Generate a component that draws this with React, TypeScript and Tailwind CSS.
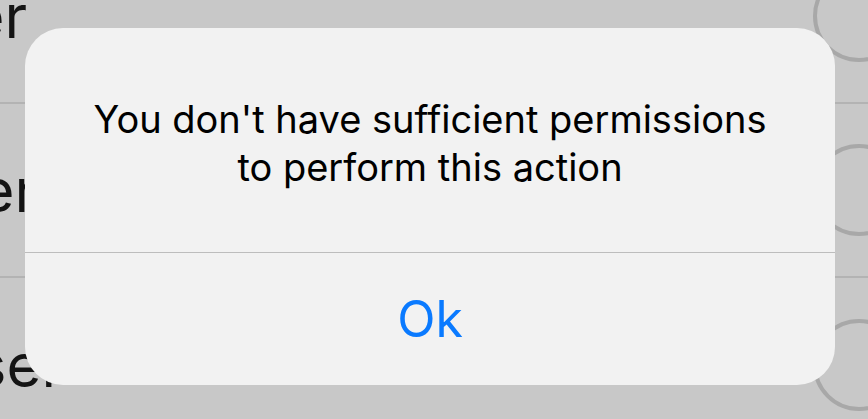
export default function App() {
  const rows = [
    { label: "Owner", shift: "-ml-[273px]" },
    { label: "Member", shift: "-ml-[263px]" },
    { label: "User", shift: "-ml-[236px]" },
  ];
  return (
    <div className="relative w-[868px] h-[419px] overflow-hidden bg-[#c8c8c8] font-['Inter',sans-serif]">
      <div className="flex flex-col -mt-[70px]">
        {rows.map((r, i) => (
          <div
            key={r.label}
            className={`flex items-center justify-between h-[174px] ${i < rows.length - 1 ? "border-b-2 border-[#b3b3b3]" : ""}`}
          >
            <span className={`text-[60px] text-[#141414] w-[300px] shrink-0 text-right leading-none whitespace-nowrap ${r.shift}`}>{r.label}</span>
            <div className="w-[92px] h-[92px] shrink-0 rounded-full border-4 border-[#a8a8a8] -mr-[37px]" />
          </div>
        ))}
      </div>

      <div className="absolute left-[25px] top-[28px] w-[810px] h-[357px] rounded-[38px] bg-[#f2f2f2] flex flex-col">
        <div className="h-[225px] flex items-center justify-center border-b border-[#bdbdbd]">
          <p className="text-[38px] leading-[48px] text-black text-center mt-[6px]">
            You don't have sufficient permissions
            <br />
            to perform this action
          </p>
        </div>
        <div className="flex-1 flex items-center justify-center">
          <span className="text-[50px] text-[#0a7aff]">Ok</span>
        </div>
      </div>
    </div>
  );
}
